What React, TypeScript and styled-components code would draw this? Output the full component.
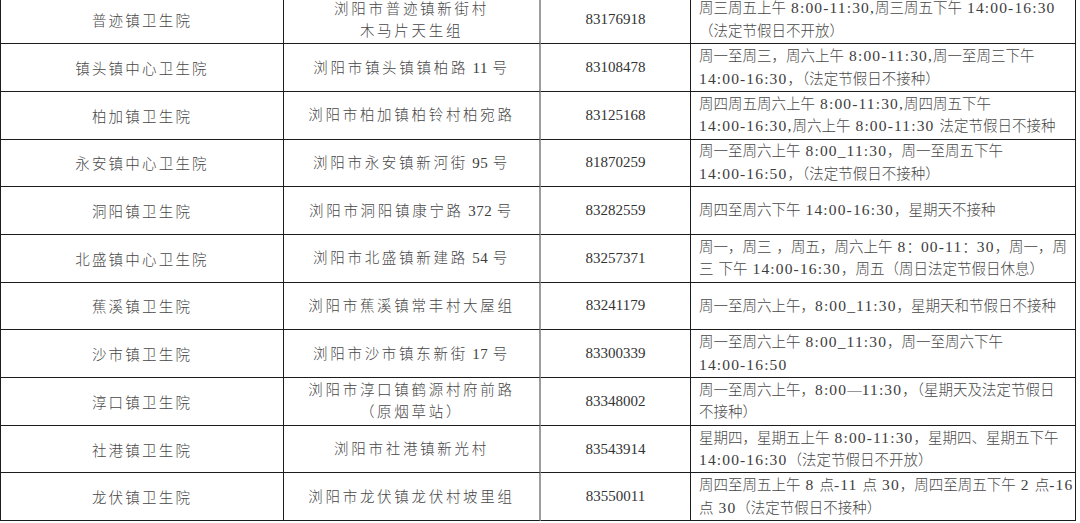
import React from 'react';
import styled, { createGlobalStyle } from 'styled-components';

const GlobalStyle = createGlobalStyle`
  html, body {
    margin: 0;
    padding: 0;
    background: #ffffff;
    overflow: hidden;
  }
  body {
    font-family: "Liberation Serif", "Noto Sans CJK SC", serif;
    color: #3f3f3f;
  }
`;

const Sheet = styled.div`
  width: 1080px;
  height: 523px;
  overflow: hidden;
`;

const Grid = styled.div`
  display: grid;
  grid-template-columns: 283px 257px 150px 385px;
  grid-auto-rows: 47.7px;
  margin-top: -3.5px;
  border-left: 1px solid #1c1c1c;
  width: max-content;
`;

type Align = 'center' | 'left';

const Cell = styled.div<{ $align?: Align; $soft?: boolean }>`
  display: flex;
  flex-direction: column;
  justify-content: center;
  align-items: ${p => (p.$align === 'left' ? 'flex-start' : 'center')};
  padding: ${p => (p.$align === 'left' ? '0 0 0 8px' : '0')};
  border-bottom: 1px solid #1c1c1c;
  border-right: ${p => (p.$soft ? '2px solid #9c9c9c' : '1px solid #1c1c1c')};
  box-sizing: border-box;
  overflow: hidden;
`;

const NameText = styled.span`
  font-size: 14.5px;
  font-weight: 300;
  letter-spacing: 2.2px;
  color: #474747;
  white-space: nowrap;
`;

const AddressText = styled.span`
  font-size: 14.5px;
  font-weight: 300;
  letter-spacing: 2.7px;
  line-height: 22px;
  color: #474747;
  white-space: nowrap;
  text-align: center;
`;

const Phone = styled.span`
  font-size: 15px;
  color: #333333;
  white-space: nowrap;
`;

const HoursLine = styled.span`
  font-size: 14.5px;
  font-weight: 300;
  line-height: 22.5px;
  color: #474747;
  white-space: nowrap;
`;

// Latin runs (digits, times) are set wider than the CJK text around them
const Latin = styled.span<{ $tight?: boolean }>`
  font-size: ${p => (p.$tight ? '15px' : '15.5px')};
  font-weight: 400;
  letter-spacing: ${p => (p.$tight ? '0.6px' : '1.15px')};
  color: #3d3d3d;
`;

const splitRuns = (text: string, tight?: boolean) =>
  text.split(/([\x20-\x7e]+)/).map((part, i) =>
    /[\x20-\x7e]/.test(part) ? (
      <Latin key={i} $tight={tight}>
        {part}
      </Latin>
    ) : (
      part
    )
  );

type Row = {
  name: string;
  address: string[];
  phone: string;
  hours: string[];
};

const rows: Row[] = [
  {
    name: '普迹镇卫生院',
    address: ['浏阳市普迹镇新街村', '木马片天生组'],
    phone: '83176918',
    hours: ['周三周五上午 8:00-11:30,周三周五下午 14:00-16:30', '（法定节假日不开放）'],
  },
  {
    name: '镇头镇中心卫生院',
    address: ['浏阳市镇头镇镇柏路 11 号'],
    phone: '83108478',
    hours: ['周一至周三，周六上午 8:00-11:30,周一至周三下午', '14:00-16:30，（法定节假日不接种）'],
  },
  {
    name: '柏加镇卫生院',
    address: ['浏阳市柏加镇柏铃村柏宛路'],
    phone: '83125168',
    hours: ['周四周五周六上午 8:00-11:30,周四周五下午', '14:00-16:30,周六上午 8:00-11:30 法定节假日不接种'],
  },
  {
    name: '永安镇中心卫生院',
    address: ['浏阳市永安镇新河街 95 号'],
    phone: '81870259',
    hours: ['周一至周六上午 8:00_11:30，周一至周五下午', '14:00-16:50，（法定节假日不接种）'],
  },
  {
    name: '洞阳镇卫生院',
    address: ['浏阳市洞阳镇康宁路 372 号'],
    phone: '83282559',
    hours: ['周四至周六下午 14:00-16:30，星期天不接种'],
  },
  {
    name: '北盛镇中心卫生院',
    address: ['浏阳市北盛镇新建路 54 号'],
    phone: '83257371',
    hours: ['周一，周三 ，周五，周六上午 8：00-11：30，周一，周', '三 下午 14:00-16:30，周五（周日法定节假日休息）'],
  },
  {
    name: '蕉溪镇卫生院',
    address: ['浏阳市蕉溪镇常丰村大屋组'],
    phone: '83241179',
    hours: ['周一至周六上午，8:00_11:30，星期天和节假日不接种'],
  },
  {
    name: '沙市镇卫生院',
    address: ['浏阳市沙市镇东新街 17 号'],
    phone: '83300339',
    hours: ['周一至周六上午 8:00_11:30，周一至周六下午', '14:00-16:50'],
  },
  {
    name: '淳口镇卫生院',
    address: ['浏阳市淳口镇鹤源村府前路', '（原烟草站）'],
    phone: '83348002',
    hours: ['周一至周六上午，8:00—11:30，（星期天及法定节假日', '不接种）'],
  },
  {
    name: '社港镇卫生院',
    address: ['浏阳市社港镇新光村'],
    phone: '83543914',
    hours: ['星期四，星期五上午 8:00-11:30，星期四、星期五下午', '14:00-16:30（法定节假日不开放）'],
  },
  {
    name: '龙伏镇卫生院',
    address: ['浏阳市龙伏镇龙伏村坡里组'],
    phone: '83550011',
    hours: ['周四至周五上午 8 点-11 点 30，周四至周五下午 2 点-16', '点 30（法定节假日不接种）'],
  },
];

const App: React.FC = () => {
  return (
    <>
      <GlobalStyle />
      <Sheet>
        <Grid>
          {rows.map(row => (
            <React.Fragment key={row.phone}>
              <Cell>
                <NameText>{row.name}</NameText>
              </Cell>
              <Cell $soft>
                {row.address.map(line => (
                  <AddressText key={line}>{splitRuns(line, true)}</AddressText>
                ))}
              </Cell>
              <Cell>
                <Phone>{row.phone}</Phone>
              </Cell>
              <Cell $align="left">
                {row.hours.map(line => (
                  <HoursLine key={line}>{splitRuns(line)}</HoursLine>
                ))}
              </Cell>
            </React.Fragment>
          ))}
        </Grid>
      </Sheet>
    </>
  );
};

export default App;
